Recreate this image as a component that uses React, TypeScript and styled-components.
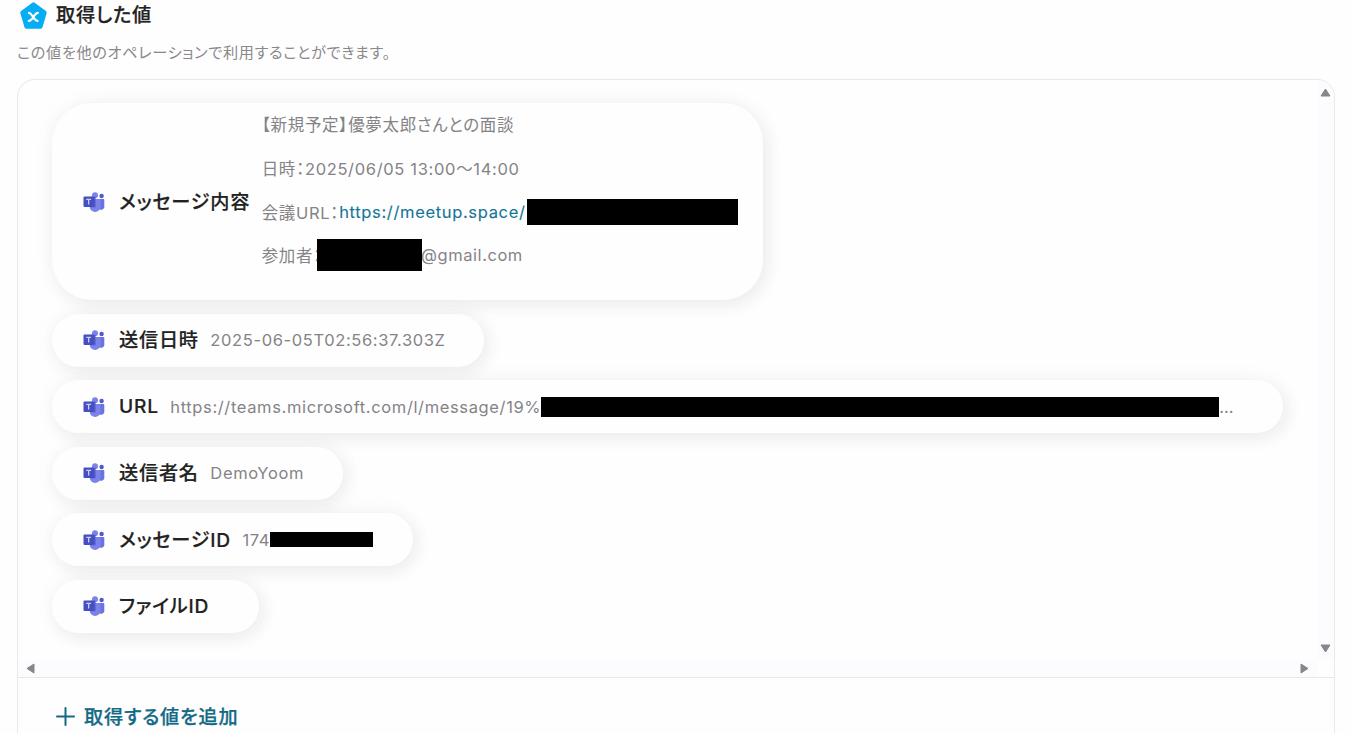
import type { ReactNode } from "react";
import styled, { createGlobalStyle } from "styled-components";

const GlobalStyle = createGlobalStyle`
  * {
    box-sizing: border-box;
  }

  body {
    margin: 0;
    background: #fefefe;
    font-family: Inter, "Noto Sans CJK JP", sans-serif;
    font-feature-settings: "palt";
    overflow: hidden;
  }
`;

const Page = styled.main`
  display: flex;
  flex-direction: column;
  height: 733px;
  padding: 0 16px 0 17px;
  overflow: hidden;
`;

const Header = styled.header`
  display: flex;
  align-items: center;
  gap: 8px;
  height: 32px;
  padding-left: 2px;
`;

const Title = styled.h2`
  margin: 0;
  padding-bottom: 2px;
  font-size: 19.2px;
  font-weight: 500;
  line-height: 28px;
  letter-spacing: 0.77px;
  color: #222;
  -webkit-text-stroke: 0.25px;
  white-space: nowrap;
`;

const Description = styled.p`
  margin: 9px 0 0;
  height: 38px;
  font-size: 15.2px;
  line-height: 24px;
  letter-spacing: 0.63px;
  color: #8a888b;
  white-space: nowrap;
`;

const Panel = styled.section`
  display: flex;
  flex-direction: column;
  flex: 1;
  border: 1px solid #eae8ec;
  border-bottom: 0;
  border-radius: 18px 18px 0 0;
  overflow: hidden;
`;

const ScrollArea = styled.div`
  display: grid;
  flex-shrink: 0;
  grid-template-columns: 1fr 17px;
  grid-template-rows: 1fr 17px;
  height: 598px;
  border-bottom: 1px solid #e9e7eb;
`;

const ValueList = styled.div`
  display: flex;
  flex-direction: column;
  align-items: flex-start;
  gap: 13.3px;
  padding: 23.3px 0 0 34px;
  overflow: hidden;
`;

const Track = styled.div<{ $horizontal?: boolean }>`
  display: flex;
  flex-direction: ${(p) => (p.$horizontal ? "row" : "column")};
  align-items: center;
  justify-content: space-between;
  padding: ${(p) => (p.$horizontal ? "0 7px" : "7px 0 6px")};
  background: #fcfbfd;
`;

const Pill = styled.div<{ $width: number; $tall?: boolean }>`
  display: flex;
  flex-shrink: 0;
  align-items: center;
  width: ${(p) => p.$width}px;
  height: ${(p) => (p.$tall ? 197 : 53.2)}px;
  padding-left: 31px;
  border-radius: ${(p) => (p.$tall ? 40 : 27)}px;
  background: #fefefe;
  box-shadow:
    4px 5px 18px rgba(40, 25, 50, 0.065),
    0 0 26px rgba(70, 25, 95, 0.035);
`;

const Label = styled.span`
  margin-left: 14px;
  padding-bottom: 1.6px;
  font-size: 19.2px;
  font-weight: 500;
  letter-spacing: 0.77px;
  color: #222;
  -webkit-text-stroke: 0.2px;
  white-space: nowrap;
`;

const Value = styled.span`
  display: flex;
  align-items: center;
  margin-left: 11.5px;
  font-size: 16.5px;
  letter-spacing: 0.63px;
  color: #858387;
  white-space: nowrap;
`;

const Lines = styled.div`
  align-self: flex-start;
  margin-top: -1px;
`;

const Line = styled(Value)`
  height: 43.7px;
  letter-spacing: 0.66px;
`;

const Link = styled.a`
  color: #137596;
  -webkit-text-stroke: 0.1px;
  text-decoration: none;
`;

const Redacted = styled.span<{ $width: number; $height: number; $shift?: number }>`
  flex-shrink: 0;
  width: ${(p) => p.$width}px;
  height: ${(p) => p.$height}px;
  margin-left: ${(p) => p.$shift ?? 0}px;
  background: #000;
  z-index: 1;
`;

const MailDomain = styled.span`
  margin-left: -1px;
  letter-spacing: 0.55px;
`;

const AddButton = styled.button`
  display: flex;
  flex-shrink: 0;
  align-items: center;
  gap: 9px;
  height: 76px;
  padding: 0 0 0 38px;
  border: 0;
  background: none;
  font: inherit;
  font-feature-settings: "palt";
  font-size: 19.2px;
  font-weight: 500;
  letter-spacing: 0.77px;
  color: #136a86;
  -webkit-text-stroke: 0.25px;
`;

const BadgeIcon = () => (
  <svg width="29" height="29" viewBox="0 0 29 29">
    <path
      d="M14.5 2.4 25.7 10.7 21.6 24.8H7.4L3.3 10.7Z"
      fill="#05adf4"
      stroke="#05adf4"
      strokeWidth="4"
      strokeLinejoin="round"
    />
    <path d="M9.8 10.9c3.3 0 5 8 8.8 8M18.8 10.9c-3.3 0-5 8-9 8" fill="none" stroke="#fff" strokeWidth="2.1" strokeLinecap="round" />
  </svg>
);

const TeamsIcon = () => (
  <svg width="22" height="20" viewBox="-0.5 0.4 22 20">
    <circle cx="11.5" cy="3.6" r="3" fill="#7b83eb" />
    <circle cx="18.1" cy="4.4" r="2.2" fill="#5059c9" />
    <path d="M14 7.3h5.9c.6 0 .9.5.9 1.2v5.6a3.5 3.5 0 0 1-6.8 1.6z" fill="#6a73e0" />
    <path d="M7 7.3h9c.6 0 1 .4 1 1v6.6a5.4 5.4 0 0 1-10.8 0V8.3c0-.6.3-1 .8-1z" fill="#7b83eb" />
    <path d="M7 5.2h5v10.4H6.4z" fill="#4f59c8" />
    <rect x="0" y="4.8" width="10.4" height="10.6" rx="1" fill="#464fc2" />
    <path d="M2.7 7.8h4.9M5.15 7.8v5" stroke="#c9cdf7" strokeWidth="1.3" />
  </svg>
);

const Arrow = ({ rotate }: { rotate: number }) => (
  <svg width="11" height="11" viewBox="0 0 11 11">
    <path d="M5.5 2 10 9H1z" fill="#88868a" stroke="#88868a" strokeLinejoin="round" transform={`rotate(${rotate} 5.5 5.5)`} />
  </svg>
);

interface ItemProps {
  label: string;
  width: number;
  tall?: boolean;
  children?: ReactNode;
}

const Item = ({ label, width, tall, children }: ItemProps) => (
  <Pill $width={width} $tall={tall}>
    <TeamsIcon />
    <Label>{label}</Label>
    {children}
  </Pill>
);

export default function App() {
  return (
    <>
      <GlobalStyle />
      <Page>
        <Header>
          <BadgeIcon />
          <Title>取得した値</Title>
        </Header>
        <Description>この値を他のオペレーションで利用することができます。</Description>
        <Panel>
          <ScrollArea>
            <ValueList>
              <Item label="メッセージ内容" width={711} tall>
                <Lines>
                  <Line>【新規予定】優夢太郎さんとの面談</Line>
                  <Line>日時：2025/06/05 13:00〜14:00</Line>
                  <Line>
                    会議URL：<Link>https://meetup.space/</Link>
                    <Redacted $width={211} $height={26} $shift={1.5} />
                  </Line>
                  <Line>
                    参加者：
                    <Redacted $width={105} $height={32} $shift={-5} />
                    <MailDomain>@gmail.com</MailDomain>
                  </Line>
                </Lines>
              </Item>
              <Item label="送信日時" width={432}>
                <Value>2025-06-05T02:56:37.303Z</Value>
              </Item>
              <Item label="URL" width={1231}>
                <Value>
                  https://teams.microsoft.com/l/message/19%
                  <Redacted $width={678} $height={20} />
                  …
                </Value>
              </Item>
              <Item label="送信者名" width={291}>
                <Value>DemoYoom</Value>
              </Item>
              <Item label="メッセージID" width={361}>
                <Value>
                  174
                  <Redacted $width={103} $height={15} />
                </Value>
              </Item>
              <Item label="ファイルID" width={207} />
            </ValueList>
            <Track>
              <Arrow rotate={0} />
              <Arrow rotate={180} />
            </Track>
            <Track $horizontal>
              <Arrow rotate={-90} />
              <Arrow rotate={90} />
            </Track>
          </ScrollArea>
          <AddButton>
            <svg width="19" height="19" viewBox="0 0 19 19">
              <path d="M9.5 1v17M1 9.5h17" stroke="#136a86" strokeWidth="2" strokeLinecap="round" />
            </svg>
            取得する値を追加
          </AddButton>
        </Panel>
      </Page>
    </>
  );
}
